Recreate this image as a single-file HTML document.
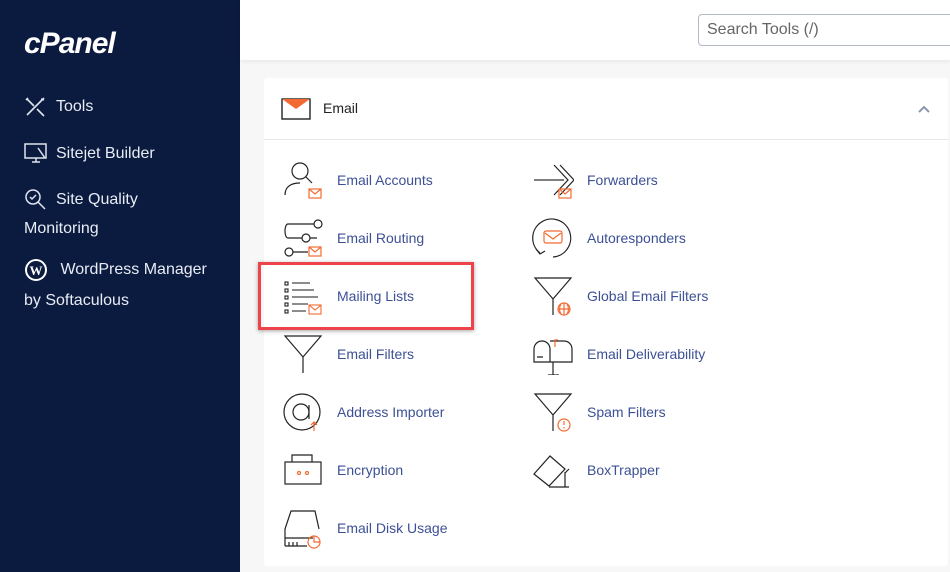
<!DOCTYPE html>
<html><head><style>
*{margin:0;padding:0;box-sizing:border-box}
body{width:950px;height:572px;overflow:hidden;font-family:"Liberation Sans",sans-serif;background:#f7f7f7;position:relative}
.side{position:absolute;left:0;top:0;width:240px;height:572px;background:#0b1a3f;color:#e8ecf4;font-size:16px}
.side .it{position:absolute;left:24px;display:flex;align-items:center;gap:8px}
.side .t{position:absolute;left:24px}
.logo{position:absolute;left:24px;top:27px;font-size:30px;font-weight:bold;font-style:italic;color:#fff;letter-spacing:-1px}
.top{position:absolute;left:240px;top:0;width:710px;height:60px;background:#fff;box-shadow:0 2px 4px rgba(0,0,0,.06)}
.search{position:absolute;left:458px;top:14px;width:270px;height:32px;border:1px solid #b4bac6;border-radius:4px;font-size:16px;color:#666;padding:6px 8px}
.card{position:absolute;left:264px;top:78px;width:684px;height:488px;background:#fff;border-radius:3px}
.hdr{height:62px;border-bottom:1px solid #e3e6ea;position:relative}
.hdr span{position:absolute;left:59px;top:22px;font-size:14px;color:#222}
.row{position:absolute;display:flex;align-items:center;font-size:14px;color:#3c5095}
.row svg{width:42px;height:42px;margin-right:13px}
.hl{position:absolute;left:258px;top:262px;width:216px;height:68px;border:3px solid #ee4449;box-shadow:0 1px 4px rgba(0,0,0,.35)}
</style></head><body>
<div class="side">
<div class="logo">cPanel</div>
<div class="it" style="top:96px"><svg width="24" height="22" viewBox="0 0 24 22" fill="none" stroke="#dfe4ee" stroke-width="1.6"><path d="M3 3l7 7M4 2l-2 2M13 13l7 7M20 2L3 19M17 3l3 1"/></svg>Tools</div>
<div class="it" style="top:142px"><svg width="24" height="24" viewBox="0 0 24 24" fill="none" stroke="#dfe4ee" stroke-width="1.5"><rect x="1" y="2" width="21" height="14"/><path d="M8 20h8M12 16v4M14 6l7 10"/></svg>Sitejet Builder</div>
<div class="it" style="top:188px"><svg width="24" height="24" viewBox="0 0 24 24" fill="none" stroke="#dfe4ee" stroke-width="1.5"><circle cx="9" cy="9" r="7"/><path d="M6 9l2 2 4-4M14 14l7 7"/></svg>Site Quality</div>
<div class="t" style="top:220px">Monitoring</div>
<div class="it" style="top:258px"><svg width="24" height="24" viewBox="0 0 24 24"><circle cx="12" cy="12" r="11" fill="#fff"/><circle cx="12" cy="12" r="9" fill="#0b1a3f"/><text x="12" y="17" font-size="13" font-weight="bold" fill="#fff" text-anchor="middle" font-family="Liberation Serif">W</text></svg>&nbsp;WordPress Manager</div>
<div class="t" style="top:292px">by Softaculous</div>
</div>
<div class="top"><div class="search">Search Tools (/)</div></div>
<div class="card">
<div class="hdr">
<svg style="position:absolute;left:17px;top:20px" width="30" height="22" viewBox="0 0 30 22"><rect x="1" y="1" width="28" height="20" fill="#fff" stroke="#111" stroke-width="1.3"/><path d="M1 1h28l-14 10z" fill="#f26a32"/></svg>
<span>Email</span>
<svg style="position:absolute;right:18px;top:27px" width="12" height="8" viewBox="0 0 12 8" fill="none" stroke="#8a97b0" stroke-width="2"><path d="M1 7l5-5 5 5"/></svg>
</div>
</div>
<div class="row" style="left:282px;top:159px"><svg viewBox="0 0 42 42" fill="none" stroke="#222" stroke-width="1.2"><circle cx="18" cy="12" r="8"/><path d="M3 36c0-9 7-12 15-12M24 18l6 6"/><rect x="27" y="30" width="12" height="9" stroke="#f26a32"/><path d="M27 30l6 5 6-5" stroke="#f26a32"/></svg>Email Accounts</div>
<div class="row" style="left:282px;top:217px"><svg viewBox="0 0 42 42" fill="none" stroke="#222" stroke-width="1.2"><circle cx="36" cy="7" r="4"/><circle cx="24" cy="21" r="4"/><circle cx="7" cy="35" r="4"/><path d="M32 7H6c-4 0-4 14 0 14h14M28 21h7M11 35h15"/><rect x="27" y="30" width="12" height="9" stroke="#f26a32"/><path d="M27 30l6 5 6-5" stroke="#f26a32"/></svg>Email Routing</div>
<div class="row" style="left:282px;top:275px"><svg viewBox="0 0 42 42" fill="none" stroke="#222" stroke-width="1.1"><rect x="3" y="7" width="3" height="3"/><rect x="3" y="14" width="3" height="3"/><rect x="3" y="21" width="3" height="3"/><rect x="3" y="28" width="3" height="3"/><rect x="3" y="35" width="3" height="3"/><path d="M10 8h18M10 15h22M10 22h26M10 29h16M10 36h14" stroke="#666" stroke-width="1.6"/><rect x="27" y="30" width="12" height="9" stroke="#f26a32"/><path d="M27 30l6 5 6-5" stroke="#f26a32"/></svg>Mailing Lists</div>
<div class="row" style="left:282px;top:333px"><svg viewBox="0 0 42 42" fill="none" stroke="#222" stroke-width="1.2"><path d="M3 3h36L21 24zM21 24v16" /></svg>Email Filters</div>
<div class="row" style="left:282px;top:391px"><svg viewBox="0 0 42 42" fill="none" stroke="#222" stroke-width="1.2"><circle cx="20" cy="21" r="18"/><circle cx="19" cy="21" r="8"/><path d="M27 14v14"/><path d="M32 40v-9M29 34l3-3 3 3" stroke="#f26a32"/></svg>Address Importer</div>
<div class="row" style="left:282px;top:449px"><svg viewBox="0 0 42 42" fill="none" stroke="#222" stroke-width="1.2"><path d="M10 13V6h20v7"/><rect x="3" y="13" width="36" height="22"/><circle cx="17" cy="24" r="1.5" stroke="#f26a32"/><circle cx="25" cy="24" r="1.5" stroke="#f26a32"/></svg>Encryption</div>
<div class="row" style="left:282px;top:507px"><svg viewBox="0 0 42 42" fill="none" stroke="#222" stroke-width="1.2"><path d="M3 39V22l6-18h24l4 18M3 31h28M3 39h22M7 35v4M11 35v4M15 35v4"/><circle cx="32" cy="35" r="6" stroke="#f26a32"/><path d="M32 29v6h6" stroke="#f26a32"/></svg>Email Disk Usage</div>
<div class="row" style="left:532px;top:159px"><svg viewBox="0 0 42 42" fill="none" stroke="#222" stroke-width="1.2"><path d="M2 21h30" stroke="#555" stroke-width="1.6"/><path d="M22 6l14 15-14 15M28 6l14 15-14 15"/><rect x="27" y="30" width="12" height="9" stroke="#f26a32"/><path d="M27 30l6 5 6-5" stroke="#f26a32"/></svg>Forwarders</div>
<div class="row" style="left:532px;top:217px"><svg viewBox="0 0 42 42" fill="none" stroke="#222" stroke-width="1.2"><path d="M8 36A19 19 0 1 1 21 40"/><path d="M4 32l4 5 5-3"/><rect x="12" y="14" width="18" height="12" rx="2" stroke="#f26a32"/><path d="M13 16l8 6 8-6" stroke="#f26a32"/></svg>Autoresponders</div>
<div class="row" style="left:532px;top:275px"><svg viewBox="0 0 42 42" fill="none" stroke="#222" stroke-width="1.2"><path d="M3 3h36L21 24zM21 24v16"/><circle cx="32" cy="34" r="6" stroke="#f26a32"/><path d="M26 34h12M32 28v12M29 29c-2 3-2 7 0 10M35 29c2 3 2 7 0 10" stroke="#f26a32"/></svg>Global Email Filters</div>
<div class="row" style="left:532px;top:333px"><svg viewBox="0 0 42 42" fill="none" stroke="#222" stroke-width="1.2"><path d="M2 29V16a8 8 0 0 1 16 0v13zM18 8h14a8 8 0 0 1 8 8v13H18M21 29v14M16 42h11M5 24h6"/><path d="M23 14V7h3" stroke="#f26a32"/></svg>Email Deliverability</div>
<div class="row" style="left:532px;top:391px"><svg viewBox="0 0 42 42" fill="none" stroke="#222" stroke-width="1.2"><path d="M3 3h36L21 24zM21 24v16"/><circle cx="32" cy="34" r="6" stroke="#f26a32"/><path d="M32 30v4M32 36v1.5" stroke="#f26a32"/></svg>Spam Filters</div>
<div class="row" style="left:532px;top:449px"><svg viewBox="0 0 42 42" fill="none" stroke="#222" stroke-width="1.2"><path d="M2 25L18 7l15 13-16 17zM17 38h20M33 38V23M33 24l4-4"/></svg>BoxTrapper</div>
<div class="hl"></div>
</body></html>
